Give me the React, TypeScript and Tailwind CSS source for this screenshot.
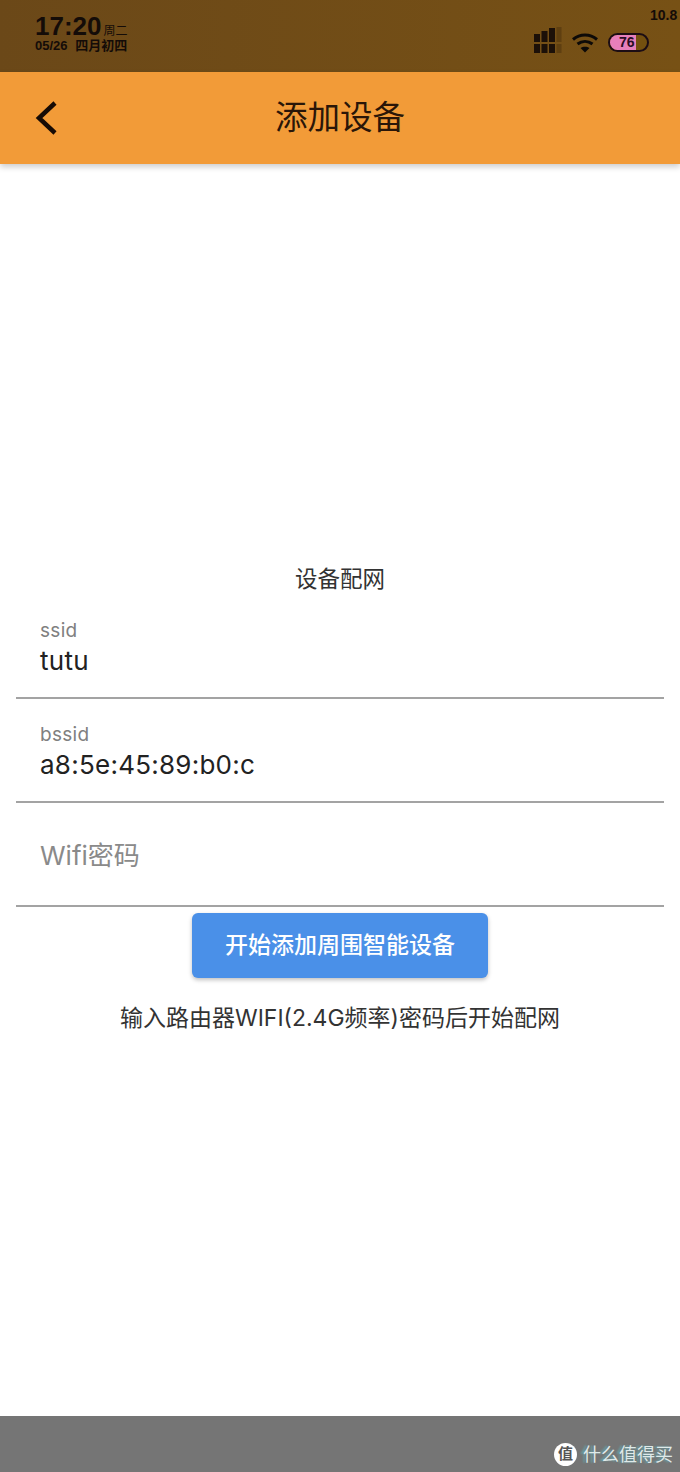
const FONT = "font-['Inter','Noto_Sans_CJK_SC',sans-serif]";

function Field({ label, value }: { label: string; value: string }) {
  return (
    <div className="h-[104px] mx-4 border-b-2 border-[#a3a3a3] px-6 pt-[24px]">
      <div className="text-[19px] leading-[24px] tracking-[0.3px] text-[#808080]">{label}</div>
      <div className="text-[26px] leading-[36px] text-[#222] tracking-[0.25px]">{value}</div>
    </div>
  );
}

function StatusIcons() {
  return (
    <div className="flex items-center gap-[10px]">
      <svg className="mb-[5px]" width="28" height="26" viewBox="0 0 28 26">
        <g fill="#1c1008">
          <rect x="0" y="7" width="6" height="8" />
          <rect x="0" y="17" width="6" height="9" />
          <rect x="7.5" y="4" width="6" height="11" />
          <rect x="7.5" y="17" width="6" height="9" />
          <rect x="15" y="1" width="6" height="14" />
          <rect x="15" y="17" width="6" height="9" />
        </g>
        <rect x="22.5" y="0" width="5" height="15" fill="#5f3f10" />
        <rect x="22.5" y="17" width="5" height="9" fill="#5f3f10" />
      </svg>
      <svg width="26" height="20" viewBox="0 0 26 20" fill="none" stroke="#0d0a08" strokeWidth="3">
        <path d="M1 6.5C8 0.5 18 0.5 25 6.5" />
        <path d="M5.5 11C10 7.5 16 7.5 20.5 11" />
        <path d="M13 19.5L8.5 15C11 13.2 15 13.2 17.5 15Z" fill="#0d0a08" stroke="none" />
      </svg>
      <div className="w-[41px] h-[19px] rounded-full border-2 border-[#1c0d14] overflow-hidden flex items-center bg-[#74500f] relative">
        <div className="w-[26px] h-full bg-[#e77fbb]" />
        <span className="absolute left-[9px] top-[-1px] text-[14px] leading-[17px] font-bold text-[#2a0d25] font-['Liberation_Sans',sans-serif]">76</span>
      </div>
    </div>
  );
}

export default function App() {
  return (
    <div className={`${FONT} w-[680px] h-[1472px] bg-white flex flex-col overflow-hidden`}>
      <div className="h-[72px] bg-gradient-to-r from-[#6b4818] to-[#775115] flex justify-between pl-[35px] text-[#140c08] font-['Liberation_Sans','Noto_Sans_CJK_SC',sans-serif] font-bold shrink-0">
        <div className="pt-[14px]">
          <div className="flex items-end h-[25px]">
            <span className="text-[26px] leading-[25px]">17:20</span>
            <span className="text-[12px] leading-[15px] font-normal ml-[2px]">周二</span>
          </div>
          <div className="text-[13px] leading-[13px] whitespace-nowrap [word-spacing:4px]">05/26 四月初四</div>
        </div>
        <div className="flex flex-col items-end">
          <div className="text-[14px] leading-[16px] mt-[7px] w-[30px] overflow-hidden whitespace-nowrap">10.8</div>
          <div className="mr-[31px] mt-[4px]"><StatusIcons /></div>
        </div>
      </div>

      <div className="h-[92px] bg-[#f29b38] flex items-center relative shadow-[0_3px_6px_rgba(0,0,0,0.2)] shrink-0 pl-[33px]">
        <svg width="26" height="36" viewBox="0 0 26 36" fill="none" stroke="#170b05" strokeWidth="4.5">
          <path d="M22 3L6 18L22 33" />
        </svg>
        <div className="absolute inset-0 flex items-center justify-center text-[32.5px] font-normal text-[#2a1608]">添加设备</div>
      </div>

      <div className="flex-1 flex flex-col pt-[399px]">
        <div className="text-center text-[22.5px] leading-[32px] text-[#333]">设备配网</div>
        <div>
          <Field label="ssid" value="tutu" />
          <Field label="bssid" value="a8:5e:45:89:b0:c" />
          <div className="h-[104px] mx-4 border-b-2 border-[#a3a3a3] px-6 pt-[3px] flex items-center">
            <span className="text-[26px] text-[#8a8a8a]">Wifi密码</span>
          </div>
        </div>
        <button className="self-center mt-[6px] w-[296px] h-[65px] rounded-[6px] bg-[#4a90e8] text-white text-[23px] font-medium shadow-[0_2px_4px_rgba(0,0,0,0.25)]">
          开始添加周围智能设备
        </button>
        <div className="text-center text-[23px] leading-[32px] text-[#333] mt-[24px]">输入路由器WIFI(2.4G频率)密码后开始配网</div>
      </div>

      <div className="h-[56px] bg-[#757575] flex items-end justify-end pr-[7px] pb-[6px] gap-[6px] shrink-0">
        <div className="w-[23px] h-[23px] rounded-full bg-white flex items-center justify-center text-[15px] text-[#555] font-bold">值</div>
        <span className="text-[18px] leading-[23px] text-[#dfe9e9] [text-shadow:-3px_0_2px_rgba(90,190,200,0.6)]">什么值得买</span>
      </div>
    </div>
  );
}
